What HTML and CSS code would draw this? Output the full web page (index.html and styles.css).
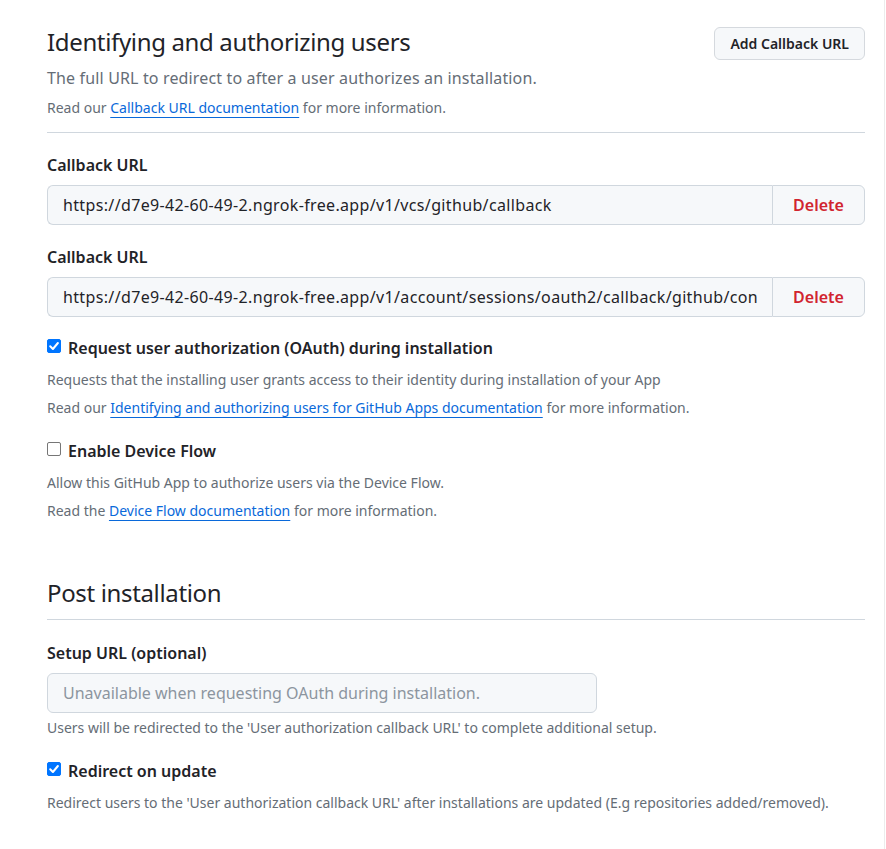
FILE: index.html
```html
<!DOCTYPE html>
<html lang="en">
<head>
<meta charset="utf-8">
<title>Identifying and authorizing users</title>
<link rel="stylesheet" href="styles.css">
</head>
<body>
<div class="page">
  <div class="content">
    <div class="subhead">
      <div class="subhead-main">
        <h2 class="subhead-title">Identifying and authorizing users</h2>
        <p class="subhead-desc">The full URL to redirect to after a user authorizes an installation.</p>
        <p class="note note-first">Read our <a href="#">Callback URL documentation</a> for more information.</p>
      </div>
      <button class="btn" type="button">Add Callback URL</button>
    </div>

    <div class="field field-first">
      <label class="label">Callback URL</label>
      <div class="input-group">
        <input class="input" type="text" readonly value="https://d7e9-42-60-49-2.ngrok-free.app/v1/vcs/github/callback">
        <button class="btn-delete" type="button">Delete</button>
      </div>
    </div>

    <div class="field">
      <label class="label">Callback URL</label>
      <div class="input-group">
        <input class="input" type="text" readonly value="https://d7e9-42-60-49-2.ngrok-free.app/v1/account/sessions/oauth2/callback/github/connect">
        <button class="btn-delete" type="button">Delete</button>
      </div>
    </div>

    <div class="check-field">
      <div class="check-row">
        <span class="checkbox checked"><svg viewBox="0 0 14 14" width="14" height="14"><path d="M3.2 7.3 L5.9 10 L10.9 4" fill="none" stroke="#fff" stroke-width="2" stroke-linecap="round" stroke-linejoin="round"/></svg></span>
        <span class="check-label">Request user authorization (OAuth) during installation</span>
      </div>
      <p class="note">Requests that the installing user grants access to their identity during installation of your App</p>
      <p class="note">Read our <a href="#">Identifying and authorizing users for GitHub Apps documentation</a> for more information.</p>
    </div>

    <div class="check-field check-second">
      <div class="check-row">
        <span class="checkbox"></span>
        <span class="check-label">Enable Device Flow</span>
      </div>
      <p class="note">Allow this GitHub App to authorize users via the Device Flow.</p>
      <p class="note">Read the <a href="#">Device Flow documentation</a> for more information.</p>
    </div>

    <h2 class="section-title">Post installation</h2>

    <div class="field field-setup">
      <label class="label">Setup URL (optional)</label>
      <input class="input input-disabled" type="text" disabled placeholder="Unavailable when requesting OAuth during installation.">
      <p class="note">Users will be redirected to the 'User authorization callback URL' to complete additional setup.</p>
    </div>

    <div class="check-field check-redirect">
      <div class="check-row">
        <span class="checkbox checked"><svg viewBox="0 0 14 14" width="14" height="14"><path d="M3.2 7.3 L5.9 10 L10.9 4" fill="none" stroke="#fff" stroke-width="2" stroke-linecap="round" stroke-linejoin="round"/></svg></span>
        <span class="check-label">Redirect on update</span>
      </div>
      <p class="note">Redirect users to the 'User authorization callback URL' after installations are updated (E.g repositories added/removed).</p>
    </div>
  </div>
</div>
</body>
</html>
```

FILE: styles.css
```css
* { box-sizing: border-box; }
html, body { margin: 0; padding: 0; background: #fff; }
body {
  font-family: "Noto Sans", "Open Sans", "Liberation Sans", sans-serif;
  color: #1f2328;
}
.page {
  width: 885px;
  min-height: 849px;
  border-right: 1px solid #ececec;
}
.content {
  margin-left: 47px;
  width: 818px;
  padding-top: 24px;
}
.subhead {
  display: flex;
  justify-content: space-between;
  align-items: flex-start;
  border-bottom: 1px solid #d0d7de;
  padding-bottom: 14px;
}
.subhead-title {
  margin: 0;
  font-size: 24px;
  font-weight: 400;
  line-height: 36px;
  letter-spacing: -0.35px;
}
.subhead-desc {
  margin: 6px 0 0;
  font-size: 16px;
  line-height: 24px;
  color: #656d76;
  letter-spacing: 0.15px;
}
.note {
  margin: 8px 0 0;
  font-size: 14px;
  line-height: 20px;
  color: #656d76;
}
.note-first { margin-top: 8px; }
.note a {
  color: #0969da;
  text-decoration: underline;
  text-underline-offset: 4px;
  text-decoration-thickness: 1px;
}
.btn {
  margin-top: 3px;
  height: 33px;
  padding: 0 15px;
  font-family: inherit;
  font-size: 14px;
  font-weight: 600;
  color: #1f2328;
  background: #f6f8fa;
  border: 1px solid #d5d9de;
  border-radius: 6px;
}
.field { margin-top: 20px; }
.field-first { margin-top: 20px; }
.label {
  display: block;
  font-size: 16px;
  font-weight: 600;
  line-height: 24px;
  margin-bottom: 8px;
}
.input-group {
  display: flex;
  height: 40px;
}
.input {
  font-family: inherit;
  font-size: 16px;
  color: #1f2328;
  background: #f6f8fa;
  border: 1px solid #d0d7de;
  border-radius: 6px;
  padding: 0 15px;
  height: 40px;
  outline: none;
  letter-spacing: 0.35px;
}
.input-group .input {
  flex: 1;
  min-width: 0;
  border-radius: 6px 0 0 6px;
  border-right: none;
}
.btn-delete {
  width: 93px;
  flex: none;
  font-family: inherit;
  font-size: 16px;
  font-weight: 600;
  color: #d1242f;
  background: #f6f8fa;
  border: 1px solid #d0d7de;
  border-radius: 0 6px 6px 0;
}
.check-field { margin-top: 19px; }
.check-second { margin-top: 21px; }
.check-row {
  display: flex;
  align-items: center;
  gap: 7px;
  height: 24px;
}
.check-row + .note { margin-top: 10px; }
.checkbox {
  width: 14px;
  height: 14px;
  border: 1px solid #767676;
  border-radius: 2px;
  background: #fff;
  display: inline-flex;
  flex: none;
  margin-top: -4px;
}
.checkbox.checked {
  background: #0075ff;
  border-color: #0075ff;
}
.checkbox svg { display: block; margin: -1px; }
.check-label {
  font-size: 16px;
  font-weight: 600;
  line-height: 24px;
}
.section-title {
  margin: 54px 0 0;
  font-size: 24px;
  font-weight: 400;
  line-height: 36px;
  padding-bottom: 8px;
  border-bottom: 1px solid #d0d7de;
  letter-spacing: -0.35px;
}
.field-setup { margin-top: 21px; }
.field-setup .label { margin-bottom: 8px; }
.input-disabled {
  display: block;
  width: 550px;
  height: 40px;
  letter-spacing: 0;
}
.input-disabled::placeholder { color: #8c959f; }
.field-setup .note { margin-top: 5px; }
.check-redirect { margin-top: 21px; }
```
